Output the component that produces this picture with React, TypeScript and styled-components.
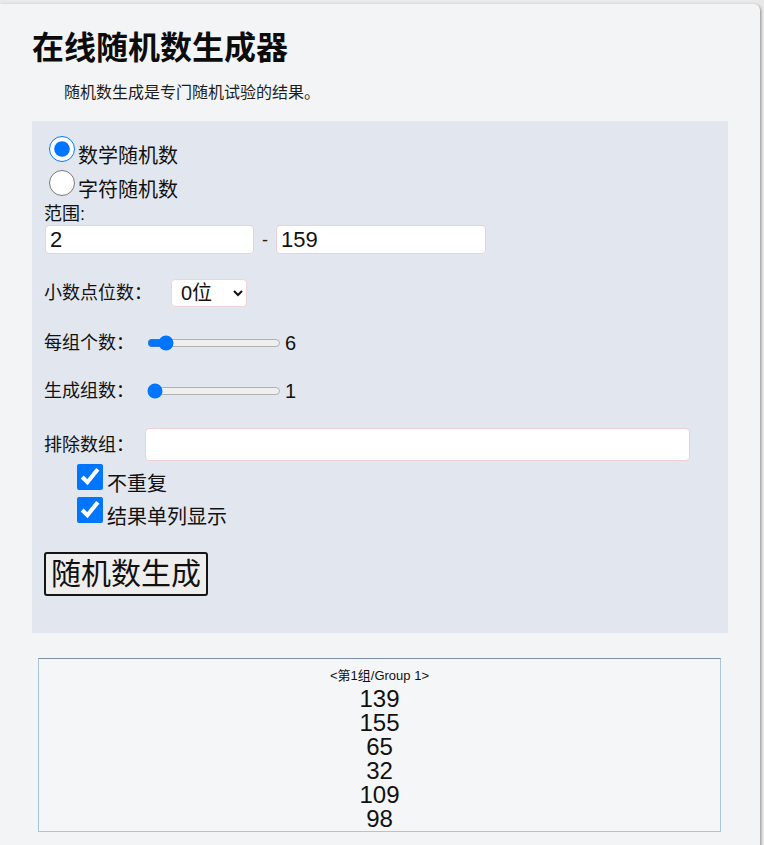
import React, { useState } from "react";
import styled, { createGlobalStyle } from "styled-components";

const GlobalStyle = createGlobalStyle`
  html, body {
    margin: 0;
    padding: 0;
    background: #e9e9e9;
  }
  body {
    font-family: "Liberation Sans", "Noto Sans CJK SC", sans-serif;
    color: #111;
    overflow: hidden;
  }
`;

const Card = styled.div`
  margin-top: 4px;
  width: 760px;
  box-sizing: border-box;
  padding: 24px 32px 40px 32px;
  background: #f3f4f6;
  border-radius: 0 6px 6px 0;
  box-shadow: 1px 1px 3px rgba(0, 0, 0, 0.4);
`;

const Title = styled.h1`
  margin: 0;
  font-size: 32px;
  line-height: 40px;
  font-weight: 700;
  color: #0c0c0c;
  font-family: "Liberation Sans", "Noto Sans CJK SC", sans-serif;
`;

const Intro = styled.p`
  margin: 13px 0 0 0;
  padding-left: 32px;
  font-size: 16px;
  line-height: 24px;
  color: #1c1c1c;
`;

const Panel = styled.form`
  margin-top: 16px;
  background: #e2e7ef;
  padding: 15px 12px 37px 12px;
  display: flex;
  flex-direction: column;
  align-items: flex-start;
`;

const ChoiceRow = styled.label<{ $mt?: number; $indent?: number }>`
  display: flex;
  align-items: flex-end;
  height: 31px;
  margin-top: ${(p) => p.$mt ?? 0}px;
  padding-left: ${(p) => p.$indent ?? 0}px;
  font-size: 20px;
  line-height: 22px;
  color: #111;
`;

const Radio = styled.input.attrs({ type: "radio" })`
  width: 26px;
  height: 26px;
  margin: 0 3px 5px 5px;
  flex: none;
`;

const Check = styled.input.attrs({ type: "checkbox" })`
  width: 26px;
  height: 26px;
  margin: 0 4px 5px 5px;
  flex: none;
`;

const Caption = styled.div<{ $mt?: number }>`
  margin-top: ${(p) => p.$mt ?? 0}px;
  font-size: 18px;
  line-height: 21px;
`;

const FieldRow = styled.div<{ $mt?: number; $h: number }>`
  display: flex;
  align-items: center;
  height: ${(p) => p.$h}px;
  margin-top: ${(p) => p.$mt ?? 0}px;
  font-size: 18px;
  line-height: 22px;
`;

const TextBox = styled.input<{ $w: number; $h: number; $ml?: number }>`
  box-sizing: border-box;
  width: ${(p) => p.$w}px;
  height: ${(p) => p.$h}px;
  margin: 0 0 0 ${(p) => p.$ml ?? 0}px;
  padding: 0 4px;
  border: 1px solid #efcfd2;
  border-radius: 4px;
  background: #fff;
  font-family: "Liberation Sans", "Noto Sans CJK SC", sans-serif;
  font-size: 22px;
  color: #111;
  outline: none;
`;

const Dash = styled.span`
  margin: 0 8px 0 8px;
  font-size: 18px;
  color: #222;
`;

const Select = styled.select`
  box-sizing: border-box;
  width: 76px;
  height: 28px;
  margin-left: 19px;
  padding: 0 0 0 5px;
  border: 1px solid #efd5d7;
  border-radius: 4px;
  background: #fff;
  font-family: "Liberation Sans", "Noto Sans CJK SC", sans-serif;
  font-size: 20px;
  color: #111;
`;

const Range = styled.input.attrs({ type: "range" })`
  width: 134px;
  margin: 0 4px 0 13px;
`;

const Value = styled.span`
  font-size: 20px;
  line-height: 24px;
  color: #111;
`;

const Generate = styled.button`
  margin-top: 24px;
  box-sizing: border-box;
  height: 44px;
  padding: 0 5px;
  border: 2px solid #151515;
  border-radius: 3px;
  background: #efeeee;
  font-family: "Liberation Sans", "Noto Sans CJK SC", sans-serif;
  font-size: 30px;
  line-height: 38px;
  color: #111;
`;

const Result = styled.div`
  margin: 25px 7px 0 6px;
  border: 1px solid #abc6dc;
  border-top-color: #7f8fa3;
  background: #f4f6f8;
  text-align: center;
  padding-top: 9px;
`;

const GroupLabel = styled.div`
  font-size: 13px;
  line-height: 16px;
  margin-bottom: 3px;
  color: #111;
`;

const Num = styled.div`
  font-size: 24px;
  line-height: 24px;
  height: 24px;
  color: #111;
`;

export default function App() {
  const [mode, setMode] = useState("math");
  const [count, setCount] = useState(6);
  const [groups, setGroups] = useState(1);
  const numbers = [139, 155, 65, 32, 109, 98];

  return (
    <>
      <GlobalStyle />
      <Card>
        <Title>在线随机数生成器</Title>
        <Intro>随机数生成是专门随机试验的结果。</Intro>
        <Panel onSubmit={(e) => e.preventDefault()}>
          <ChoiceRow>
            <Radio name="mode" checked={mode === "math"} onChange={() => setMode("math")} />
            数学随机数
          </ChoiceRow>
          <ChoiceRow $mt={3}>
            <Radio name="mode" checked={mode === "char"} onChange={() => setMode("char")} />
            字符随机数
          </ChoiceRow>
          <Caption $mt={3}>范围:</Caption>
          <FieldRow $h={29}>
            <TextBox $w={209} $h={29} defaultValue="2" $ml={1} />
            <Dash>-</Dash>
            <TextBox $w={210} $h={29} defaultValue="159" />
          </FieldRow>
          <FieldRow $h={28} $mt={25}>
            小数点位数：
            <Select defaultValue="0">
              <option value="0">0位</option>
              <option value="1">1位</option>
              <option value="2">2位</option>
            </Select>
          </FieldRow>
          <FieldRow $h={28} $mt={22}>
            每组个数：
            <Range min={1} max={55} value={count} onChange={(e) => setCount(Number(e.target.value))} />
            <Value>{count}</Value>
          </FieldRow>
          <FieldRow $h={28} $mt={20}>
            生成组数：
            <Range min={1} max={50} value={groups} onChange={(e) => setGroups(Number(e.target.value))} />
            <Value>{groups}</Value>
          </FieldRow>
          <FieldRow $h={33} $mt={23}>
            排除数组：
            <TextBox $w={545} $h={33} $ml={11} />
          </FieldRow>
          <ChoiceRow $mt={3} $indent={28}>
            <Check defaultChecked />
            不重复
          </ChoiceRow>
          <ChoiceRow $mt={2} $indent={28}>
            <Check defaultChecked />
            结果单列显示
          </ChoiceRow>
          <Generate type="submit">随机数生成</Generate>
        </Panel>
        <Result>
          <GroupLabel>&lt;第1组/Group 1&gt;</GroupLabel>
          {numbers.map((n) => (
            <Num key={n}>{n}</Num>
          ))}
        </Result>
      </Card>
    </>
  );
}
